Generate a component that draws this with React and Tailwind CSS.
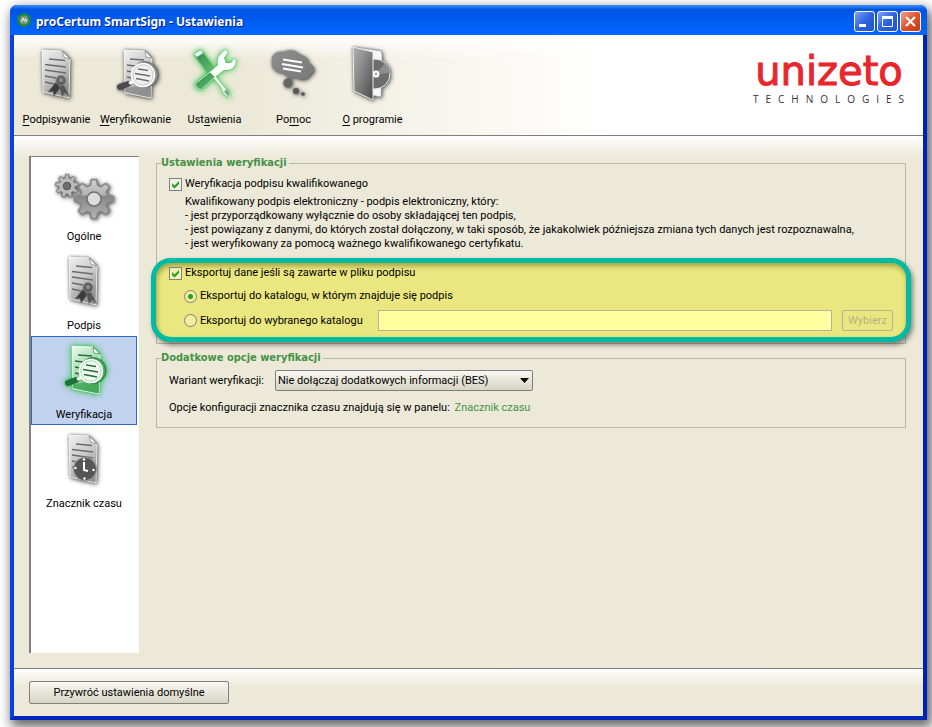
import React, { useState } from "react";

const GLOW = {
  gray: "drop-shadow(0 0 1px rgba(0,0,0,0.35)) drop-shadow(1px 1px 2px rgba(0,0,0,0.6))",
  green: "drop-shadow(0 0 1px #2fb84a) drop-shadow(0 0 3px #2fc24a)",
};

const TONES = {
  gray: { light: "#f1f1f1", mid: "#8f8f8f", dark: "#4a4a4a", line: "#6b6b6b", soft: "#c9c9c9" },
  green: { light: "#eefaef", mid: "#43a85a", dark: "#1d7136", line: "#2c6b3c", soft: "#a5dcae" },
};

function Icon({ tone = "gray", children }) {
  return (
    <svg
      viewBox="0 0 56 56"
      className="h-14 w-14 shrink-0 overflow-visible"
      style={{ filter: GLOW[tone] }}
      aria-hidden="true"
    >
      <defs>
        <linearGradient id={`page-${tone}`} x1="0" y1="0" x2="0.5" y2="1">
          <stop offset="0%" stopColor={TONES[tone].light} />
          <stop offset="55%" stopColor={TONES[tone].soft} />
          <stop offset="100%" stopColor={TONES[tone].mid} />
        </linearGradient>
        <linearGradient id={`metal-${tone}`} x1="0" y1="0" x2="1" y2="1">
          <stop offset="0%" stopColor={tone === "gray" ? "#b4b4b4" : "#2a8a42"} />
          <stop offset="100%" stopColor={tone === "gray" ? "#4a4a4a" : "#6dbd7c"} />
        </linearGradient>
      </defs>
      {children}
    </svg>
  );
}

function Page({ tone = "gray" }) {
  const c = TONES[tone];
  return (
    <g>
      <path
        d="M13 5 L33 6 L41 14 L40 53 L14 47 Z"
        fill={`url(#page-${tone})`}
        stroke="#fff"
        strokeWidth="0.8"
      />
      <path d="M33 6 L41 14 L35 12 Z" fill="#fff" stroke={c.line} strokeWidth="0.6" />
      <path
        d="M20 14 L36 15.5 M16 19.5 L37 22 M16 25 L37 28 M16 31 L27 33 M16 37 L25 39"
        stroke={c.line}
        strokeWidth="1.5"
        fill="none"
      />
    </g>
  );
}

function SignIcon() {
  return (
    <Icon>
      <Page />
      <path d="M27 37 L19 47 L24 46.5 L25 51 L33 41 Z" fill="#3c3c3c" stroke="#777" strokeWidth="0.5" />
      <path d="M34 38 L41 52 L36 48 L33 52 L30 41 Z" fill="#555" stroke="#888" strokeWidth="0.5" />
      <circle cx="32" cy="35.5" r="5" fill="#5c5c5c" stroke="#8a8a8a" />
      <circle cx="32" cy="35" r="2.6" fill="#8c8c8c" stroke="#555" strokeWidth="0.6" />
    </Icon>
  );
}

function VerifyIcon({ tone = "gray" }) {
  const c = TONES[tone];
  return (
    <Icon tone={tone}>
      <path
        d="M16 5 L37 6 L44 13 L43 53 L17 48 Z"
        fill={`url(#page-${tone})`}
        stroke="#fff"
        strokeWidth="0.8"
      />
      <path d="M37 6 L44 13 L38 12 Z" fill="#fff" stroke={c.line} strokeWidth="0.6" />
      <path
        d="M22 14 L36 15 M19 20 L27 21 M19 26 L24 27 M19 32 L24 33"
        stroke={c.line}
        strokeWidth="1.5"
      />
      <path d="M17 43 L43 40 L43 52 L17 47 Z" fill={c.mid} opacity="0.8" />
      <path d="M20 39 L12 42" stroke={c.dark} strokeWidth="6" strokeLinecap="round" />
      <path d="M26 36 L21 38.5" stroke="#fff" strokeWidth="3" />
      <circle cx="37" cy="29.5" r="13" fill={c.mid} stroke={c.line} strokeWidth="0.8" />
      <circle cx="35" cy="30" r="11.5" fill={c.light} stroke="#fff" strokeWidth="1.6" />
      <circle cx="35" cy="30" r="10.2" fill="none" stroke={c.soft} strokeWidth="1" />
      <path
        d="M30 24 L40 25.5 M27 28.5 L42 31 M28 33.5 L41 36"
        stroke={c.line}
        strokeWidth="1.4"
      />
    </Icon>
  );
}

function ToolsIcon() {
  return (
    <Icon tone="green">
      <path d="M7 9 L14 5 L25 20 L27 30 L20 27 Z" fill="url(#metal-green)" />
      <path d="M7 9 L14 5 L16 8 L10 12 Z" fill="#f1fbf2" />
      <path d="M27 29 L36 41 L42 47 L43 53 L37 49 L34 42 L25 31 Z" fill="#f4fbf4" />
      <path d="M39 44 L42 47 L42 52 L37 47 Z" fill="#86a98c" />
      <path d="M8 39 L23 27 L28 32 L14 45 Q10 44 8 39 Z" fill="url(#metal-green)" stroke="#bfe8c4" />
      <path
        d="M23 27 L31 20 Q29 11 38 5 L41 7 L37 13 L39 18 L44 18 L47 14 L49 16 Q48 26 37 25 L28 32 Z"
        fill="#fbfffb"
      />
    </Icon>
  );
}

function HelpIcon() {
  return (
    <Icon>
      <path
        d="M6 17 C5 9 12 6 18 7 C24 4 31 6 34 10 C40 11 43 15 43 19 C49 21 50 27 45 29 C43 35 36 36 31 33 C24 33 20 31 18 28 C10 28 5 23 6 17 Z"
        fill="url(#metal-gray)"
      />
      <path
        d="M6 17 C5 9 12 6 18 7 C24 4 31 6 34 10 C40 11 43 15 43 19 C49 21 50 27 45 29 C43 35 36 36 31 33 C24 33 20 31 18 28 C10 28 5 23 6 17 Z"
        fill="#858585"
        opacity="0.8"
      />
      <path d="M17 14.5 L36 17.5 M16 19 L37 22.5 M17 23.5 L35 26.5" stroke="#fff" strokeWidth="1.8" />
      <circle cx="22" cy="38" r="4.5" fill="#666" />
      <circle cx="30" cy="46" r="3" fill="#5a5a5a" />
      <circle cx="37" cy="49" r="1.8" fill="#555" />
    </Icon>
  );
}

function AboutIcon() {
  return (
    <Icon>
      <path d="M14 3 L36 6 L37 10 L36 52 L26 50 Z" fill="#f6f6f6" stroke="#aaa" strokeWidth="0.6" />
      <circle cx="30" cy="29" r="15" fill="#6d6d6d" stroke="#eee" strokeWidth="1" />
      <path d="M31 29 L40 18 A15 15 0 0 1 45 28 Z" fill="#8e8e8e" />
      <circle cx="31" cy="29" r="4" fill="#fff" stroke="#888" />
      <circle cx="31" cy="29" r="1.2" fill="#999" />
      <path
        d="M8 2 L28 7 L28 55 L9 46 Z"
        fill="url(#metal-gray)"
        stroke="#ededed"
        strokeWidth="1"
      />
    </Icon>
  );
}

function gearPath(cx, cy, outer, inner, teeth) {
  const points = [];
  const step = (Math.PI * 2) / teeth;
  for (let i = 0; i < teeth; i++) {
    const a = i * step - Math.PI / 2;
    [
      [-0.32, inner],
      [-0.17, outer],
      [0.17, outer],
      [0.32, inner],
    ].forEach(([off, r]) => {
      const x = cx + Math.cos(a + off * step) * r;
      const y = cy + Math.sin(a + off * step) * r;
      points.push(`${x.toFixed(1)} ${y.toFixed(1)}`);
    });
  }
  return `M${points.join(" L")} Z`;
}

function GearsIcon() {
  return (
    <Icon>
      <defs>
        <linearGradient id="gear" x1="0" y1="0" x2="0" y2="1">
          <stop offset="0%" stopColor="#cfcfcf" />
          <stop offset="40%" stopColor="#b2b2b2" />
          <stop offset="42%" stopColor="#858585" />
          <stop offset="100%" stopColor="#b5b5b5" />
        </linearGradient>
      </defs>
      <path d={gearPath(11, 23, 11.5, 8, 9)} fill="#bcbcbc" stroke="#808080" strokeLinejoin="round" />
      <circle cx="11" cy="23" r="3.8" fill="#6e6e6e" stroke="#555" />
      <path
        d={gearPath(38, 36, 19.5, 14, 8)}
        fill="url(#gear)"
        stroke="#8a8a8a"
        strokeWidth="1.5"
        strokeLinejoin="round"
      />
      <circle cx="38" cy="36" r="7" fill="#dcdcdc" stroke="#6f6f6f" strokeWidth="1.5" />
    </Icon>
  );
}

function ClockIcon() {
  return (
    <Icon>
      <Page />
      <circle cx="29" cy="39" r="11.5" fill="#555" stroke="#9a9a9a" strokeWidth="1.2" />
      <path d="M28 32 L28 40 L32 41" stroke="#fff" strokeWidth="2" fill="none" />
      <circle cx="28" cy="29.5" r="1.2" fill="#fff" />
      <circle cx="37.5" cy="40" r="1.2" fill="#fff" />
      <circle cx="28.5" cy="48.5" r="1.2" fill="#fff" />
      <circle cx="19.5" cy="38" r="1.2" fill="#fff" />
    </Icon>
  );
}

const TOOLBAR = [
  { id: "sign", before: "", key: "P", after: "odpisywanie", icon: <SignIcon /> },
  { id: "verify", before: "", key: "W", after: "eryfikowanie", icon: <VerifyIcon /> },
  { id: "settings", before: "Ust", key: "a", after: "wienia", icon: <ToolsIcon /> },
  { id: "help", before: "Po", key: "m", after: "oc", icon: <HelpIcon /> },
  { id: "about", before: "", key: "O", after: " programie", icon: <AboutIcon /> },
];

const PANELS = [
  { id: "general", label: "Ogólne", icon: <GearsIcon /> },
  { id: "signature", label: "Podpis", icon: <SignIcon /> },
  { id: "verification", label: "Weryfikacja", icon: <VerifyIcon tone="green" /> },
  { id: "timestamp", label: "Znacznik czasu", icon: <ClockIcon /> },
];

function TitleBar() {
  const button =
    "grid h-[21px] w-[21px] place-items-center rounded-[3px] border border-white bg-linear-to-br";
  return (
    <header className="flex h-[30px] items-center rounded-t-[7px] bg-linear-to-b from-[#3c8cf8] via-[#0054e3] via-15% to-[#0066ff] pr-1.5 pl-1.5">
      <svg viewBox="0 0 16 16" className="h-4 w-4" aria-hidden="true">
        <path d="M8 0.5 L14.5 4 V12 L8 15.5 L1.5 12 V4 Z" fill="#178a3d" />
        <circle cx="8" cy="8" r="4.5" fill="#7b9482" />
        <path d="M5.5 10 L7 6 L8.5 9.5 L9.5 6.5 L11 10" stroke="#e8f0ea" fill="none" />
      </svg>
      <h1 className="mt-[3px] ml-1 flex-1 truncate font-['Noto_Sans',sans-serif] text-[12px] leading-4 font-bold text-white [text-shadow:1px_1px_0_#0a1f7a]">
        proCertum SmartSign - Ustawienia
      </h1>
      <div className="mt-[3px] flex gap-0.5">
        <button aria-label="Minimalizuj" className={`${button} from-[#7ea2f5] via-[#2f62e0] to-[#2052c8]`}>
          <svg viewBox="0 0 19 19" className="h-[19px] w-[19px]">
            <rect x="4" y="12" width="7" height="3" fill="#fff" />
          </svg>
        </button>
        <button aria-label="Maksymalizuj" className={`${button} from-[#7ea2f5] via-[#2f62e0] to-[#2052c8]`}>
          <svg viewBox="0 0 19 19" className="h-[19px] w-[19px]">
            <path d="M4.5 5 H14.5 V14.5 H4.5 Z" stroke="#fff" fill="none" />
            <rect x="4" y="4" width="11" height="3" fill="#fff" />
          </svg>
        </button>
        <button aria-label="Zamknij" className={`${button} from-[#f0a088] via-[#e0512c] to-[#c8360c]`}>
          <svg viewBox="0 0 19 19" className="h-[19px] w-[19px]">
            <path d="M5 5 L14 14 M14 5 L5 14" stroke="#fff" strokeWidth="2.2" />
          </svg>
        </button>
      </div>
    </header>
  );
}

function Toolbar() {
  return (
    <div className="border-b border-[#7f7f7f] bg-linear-to-r from-[#ece9d8] from-25% to-white to-65%">
      <div className="flex justify-between bg-linear-to-b from-white to-transparent to-25% pr-3 pl-[3px]">
        <nav className="flex pt-2.5 pb-2">
          {TOOLBAR.map((item) => (
            <button key={item.id} className="flex w-[79px] flex-col items-center whitespace-nowrap">
              {item.icon}
              <span className="mt-3 h-3.5">
                {item.before}
                <u className="underline-offset-2">{item.key}</u>
                {item.after}
              </span>
            </button>
          ))}
        </nav>
        <div className="flex w-[164px] flex-col items-center pt-4">
          <div className="font-['DejaVu_Sans',sans-serif] text-[40px] leading-10 text-[#e8262c] [-webkit-text-stroke:1px_#e8262c]">
            unizeto
          </div>
          <div className="pt-0.5 pl-1.5 font-['Open_Sans',sans-serif] text-[10px] leading-3 tracking-[7px] text-[#333]">
            TECHNOLOGIES
          </div>
        </div>
      </div>
    </div>
  );
}

function Sidebar({ active, onSelect }) {
  return (
    <nav className="w-[110px] shrink-0 border-t border-l-2 border-[#808080] bg-white pt-px pr-0.5">
      {PANELS.map((panel) => (
        <button
          key={panel.id}
          onClick={() => onSelect(panel.id)}
          className={`flex h-[89px] w-full flex-col items-center border pt-1 ${
            active === panel.id ? "border-[#316ac5] bg-[#c1d2ee]" : "border-transparent"
          }`}
        >
          {panel.icon}
          <span className="mt-[11px]">{panel.label}</span>
        </button>
      ))}
    </nav>
  );
}

function Checkbox({ checked, onChange, children }) {
  return (
    <label className="flex h-4 w-fit items-center gap-[3px]">
      <span className="grid h-[13px] w-[13px]">
        <input
          type="checkbox"
          checked={checked}
          onChange={(e) => onChange(e.target.checked)}
          className="col-start-1 row-start-1 h-[13px] w-[13px] appearance-none border border-[#808080] bg-white/40"
        />
        {checked && (
          <svg viewBox="0 0 13 13" className="pointer-events-none col-start-1 row-start-1 h-[13px] w-[13px]">
            <path d="M3 5 L5.5 7.5 L10 3 V6 L5.5 10.5 L3 8 Z" fill="#21a121" />
          </svg>
        )}
      </span>
      {children}
    </label>
  );
}

function Radio({ value, selected, onSelect, children }) {
  return (
    <label className="flex h-4 w-fit shrink-0 items-center gap-[3px]">
      <span className="grid h-[13px] w-[13px] place-items-center">
        <input
          type="radio"
          name="target"
          value={value}
          checked={selected}
          onChange={() => onSelect(value)}
          className="col-start-1 row-start-1 h-[13px] w-[13px] appearance-none rounded-full border border-[#808080] bg-[#f0ee9c]"
        />
        {selected && (
          <span className="pointer-events-none col-start-1 row-start-1 h-[5px] w-[5px] rounded-full bg-[#21a121]" />
        )}
      </span>
      {children}
    </label>
  );
}

function Group({ title, className, children }) {
  return (
    <fieldset className={`min-w-0 border border-[#b8b8a6] px-3 ${className}`}>
      <legend className="-ml-2 pr-0.5 font-['DejaVu_Sans_Condensed','DejaVu_Sans',sans-serif] text-[11px] leading-[14px] font-bold text-[#469146]">
        {title}
      </legend>
      {children}
    </fieldset>
  );
}

function VerificationPanel() {
  const [qualified, setQualified] = useState(true);
  const [exportData, setExportData] = useState(true);
  const [target, setTarget] = useState("source");

  return (
    <main className="min-w-0 flex-1">
      <Group title="Ustawienia weryfikacji" className="pb-px">
        <div className="pt-1.5">
          <Checkbox checked={qualified} onChange={setQualified}>
            Weryfikacja podpisu kwalifikowanego
          </Checkbox>
        </div>
        <div className="mt-[3px] pl-4">
          <p>Kwalifikowany podpis elektroniczny - podpis elektroniczny, który:</p>
          <p>- jest przyporządkowany wyłącznie do osoby składającej ten podpis,</p>
          <p>
            - jest powiązany z danymi, do których został dołączony, w taki sposób, że jakakolwiek
            późniejsza zmiana tych danych jest rozpoznawalna,
          </p>
          <p>- jest weryfikowany za pomocą ważnego kwalifikowanego certyfikatu.</p>
        </div>

        {/* Highlighted export section */}
        <section className="relative -mx-[18px] mt-[7px] rounded-[20px] border-[5px] border-[#00baa4] bg-[#ebe780] px-[13px] pt-0.5 pb-1.5 shadow-[2px_3px_5px_rgba(0,0,0,0.45),inset_1px_3px_5px_rgba(90,90,0,0.5)]">
          <Checkbox checked={exportData} onChange={setExportData}>
            Eksportuj dane jeśli są zawarte w pliku podpisu
          </Checkbox>
          <div className="mt-[7px] pl-[15px]">
            <Radio value="source" selected={target === "source"} onSelect={setTarget}>
              Eksportuj do katalogu, w którym znajduje się podpis
            </Radio>
            <div className="mt-1.5 flex h-[21px] items-center">
              <div className="w-[194px] shrink-0">
                <Radio value="custom" selected={target === "custom"} onSelect={setTarget}>
                  Eksportuj do wybranego katalogu
                </Radio>
              </div>
              <input
                type="text"
                aria-label="Wybrany katalog"
                disabled={target !== "custom"}
                className="h-[21px] min-w-0 flex-1 border border-[#b6b49a] bg-[#ffff9f] px-1"
              />
              <button
                disabled={target !== "custom"}
                className="ml-2.5 h-[21px] w-[51px] rounded-[2px] border border-[#b6b48c] text-[#b4b284]"
              >
                Wybierz
              </button>
            </div>
          </div>
        </section>
      </Group>

      <Group title="Dodatkowe opcje weryfikacji" className="mt-[7px] pb-3">
        <div className="flex items-center pt-[5px]">
          <label htmlFor="variant" className="w-[106px] shrink-0">
            Wariant weryfikacji:
          </label>
          <div className="relative w-[258px]">
            <select
              id="variant"
              className="h-[21px] w-full appearance-none rounded-[2px] border border-[#7f7f7f] bg-linear-to-b from-[#f8f7f1] to-[#d8d5c4] pl-0.5"
            >
              <option>Nie dołączaj dodatkowych informacji (BES)</option>
            </select>
            <svg
              viewBox="0 0 9 5"
              className="pointer-events-none absolute top-2 right-1 h-[5px] w-[9px]"
              aria-hidden="true"
            >
              <path d="M0 0 H9 L4.5 5 Z" fill="#000" />
            </svg>
          </div>
        </div>
        <p className="mt-2.5">
          Opcje konfiguracji znacznika czasu znajdują się w panelu:{" "}
          <a href="#timestamp" className="ml-0.5 text-[#469146]">
            Znacznik czasu
          </a>
        </p>
      </Group>
    </main>
  );
}

export default function App() {
  const [panel, setPanel] = useState("verification");

  return (
    <div className="flex min-h-screen overflow-hidden bg-white pt-[5px] pr-[5px] pb-[7px] pl-2.5 font-['Roboto',sans-serif] text-[11px] leading-[14px] text-black">
      <div className="flex min-w-0 flex-1 flex-col rounded-t-[7px] bg-[#0046e0] shadow-[3px_5px_12px_2px_rgba(0,0,0,0.6)]">
        <TitleBar />
        <div className="flex flex-1 flex-col border-4 border-t-0 border-r-[#0022b4] border-b-[#0026b8] border-l-[#0a40e0] bg-[#ece9d8]">
          <Toolbar />
          <div className="flex flex-1 gap-[17px] bg-linear-to-b from-white to-[#ece9d8] to-[22px] pt-5 pr-[17px] pb-[15px] pl-[15px]">
            <Sidebar active={panel} onSelect={setPanel} />
            <VerificationPanel />
          </div>
          <footer className="border-t border-[#7f7f7f] bg-linear-to-b from-white to-[#ece9d8] to-[18px] px-[15px] pt-3 pb-3">
            <button className="h-[23px] w-[200px] rounded-[2px] border border-[#7f7f7f] bg-linear-to-b from-[#f8f7f1] to-[#d8d5c4]">
              Przywróć ustawienia domyślne
            </button>
          </footer>
        </div>
      </div>
    </div>
  );
}
